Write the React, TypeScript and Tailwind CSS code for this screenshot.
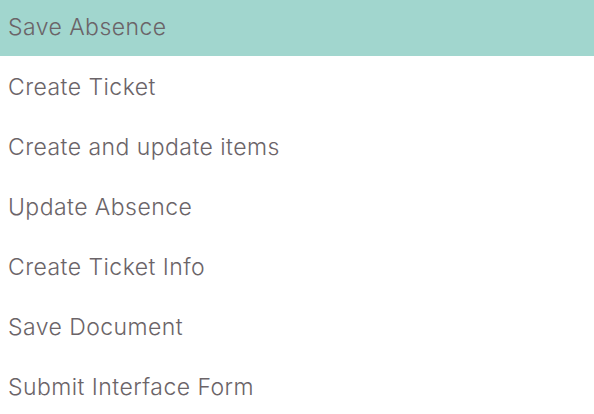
import React from "react";

const items = [
  "Save Absence",
  "Create Ticket",
  "Create and update items",
  "Update Absence",
  "Create Ticket Info",
  "Save Document",
  "Submit Interface Form",
];

export default function App() {
  return (
    <div className="w-[594px] h-[414px] overflow-hidden bg-white" style={{ fontFamily: "Inter, 'Noto Sans', sans-serif" }}>
      <ul className="-mt-[4px] flex flex-col">
        {items.map((t, i) => (
          <li
            key={t}
            className={`h-[60px] flex items-center pl-[8px] pt-[2px] text-[23px] font-light tracking-[0.45px] text-[#6b6468] ${i === 0 ? "bg-[#a1d6ce]" : ""}`}
          >
            {t}
          </li>
        ))}
      </ul>
    </div>
  );
}
